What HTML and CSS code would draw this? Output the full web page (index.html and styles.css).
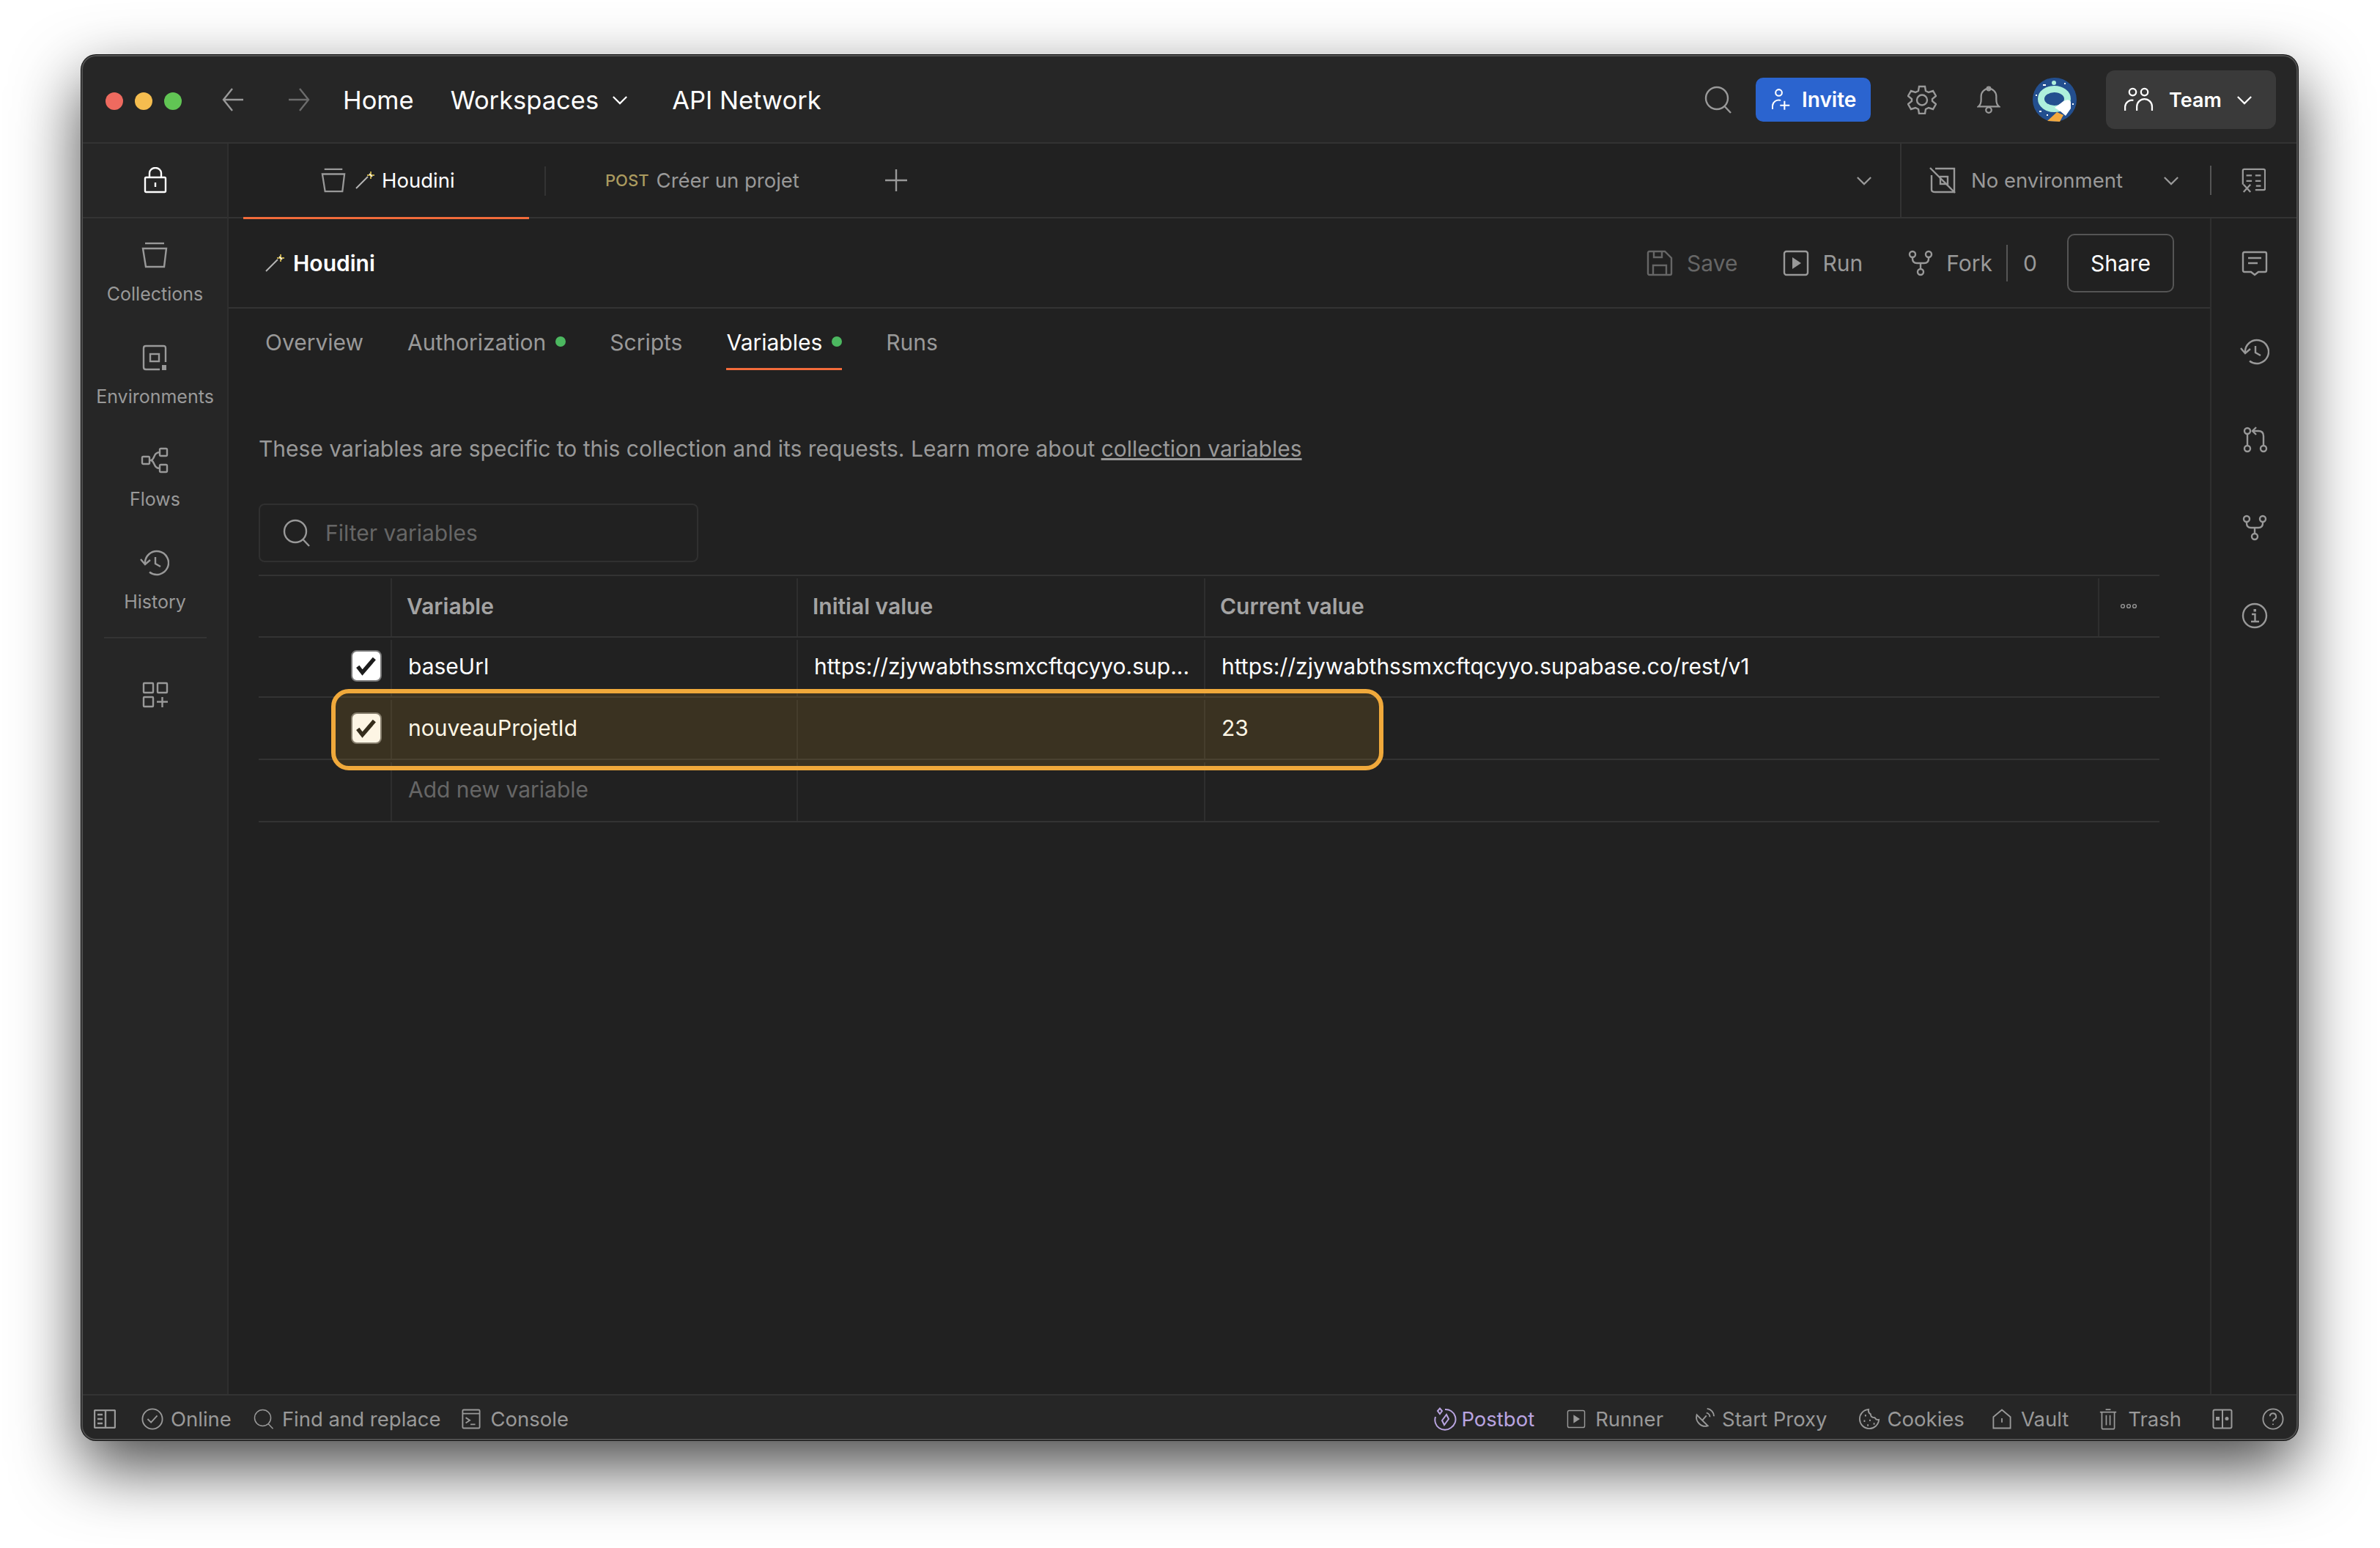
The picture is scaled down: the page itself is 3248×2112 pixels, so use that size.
FILE: index.html
```html
<!DOCTYPE html>
<html>
  <head>
    <meta charset="UTF-8" />
    <title>Houdini - Variables</title>
    <link rel="stylesheet" href="styles.css">
  </head>

  <body>
    <svg class="defs" width="0" height="0">
      <symbol id="i-search" viewBox="0 0 38 38"><circle cx="17" cy="17" r="15"/><path d="M27.5 28 L36 37"/></symbol>
      <symbol id="i-chevron" viewBox="0 0 24 14"><path d="M2 2 L12 12 L22 2"/></symbol>
      <symbol id="i-bucket" viewBox="0 0 36 36"><path d="M5 2 H31"/><path d="M2 9 H34 L31 34 H6 Z"/></symbol>
      <symbol id="i-env" viewBox="0 0 36 36"><path d="M33 24 V5 Q33 2 30 2 H6 Q3 2 3 5 V31 Q3 34 6 34 H25"/><rect x="12" y="13" width="12" height="10"/><rect class="fill" x="28" y="28" width="6" height="7"/></symbol>
      <symbol id="i-flows" viewBox="0 0 38 36"><rect x="2" y="13" width="10" height="10" rx="1.5"/><rect x="26" y="2" width="10" height="10" rx="1.5"/><rect x="26" y="24" width="10" height="10" rx="1.5"/><path d="M12 18 H14 C19 18 17 7 26 7"/><path d="M14 18 C19 18 17 29 26 29"/></symbol>
      <symbol id="i-history" viewBox="0 0 40 36"><path d="M7 19 A16 16 0 1 1 13 30.5"/><path d="M1 13 L7 20 L14 14"/><path d="M21 10 V19 L28 23"/></symbol>
      <symbol id="i-apps" viewBox="0 0 36 36"><rect x="2" y="2" width="13" height="13" rx="1"/><rect x="21" y="2" width="13" height="13" rx="1"/><rect x="2" y="21" width="13" height="13" rx="1"/><path d="M27.5 21 V35 M20 27.5 H35"/></symbol>
      <symbol id="i-lock" viewBox="0 0 36 36"><rect x="4" y="14" width="28" height="20" rx="1.5"/><path d="M10 14 V8 A8 7 0 0 1 26 8 V14"/><path d="M18 21 V27"/></symbol>
      <symbol id="i-save" viewBox="0 0 36 36"><path d="M2 4 Q2 2 4 2 H25 L34 11 V32 Q34 34 32 34 H4 Q2 34 2 32 Z"/><path d="M10 2 V10 H21 V2"/><path d="M9 34 V21 H27 V34"/></symbol>
      <symbol id="i-run" viewBox="0 0 36 36"><rect x="2" y="2" width="32" height="32" rx="3"/><path class="fill" d="M13 10 L25 18 L13 26 Z"/></symbol>
      <symbol id="i-fork" viewBox="0 0 36 36"><circle cx="7" cy="6" r="4"/><circle cx="29" cy="6" r="4"/><circle cx="18" cy="30" r="4"/><path d="M7 10 V12 Q7 18 13 18 H23 Q29 18 29 12 V10"/><path d="M18 18 V26"/></symbol>
      <symbol id="i-comment" viewBox="0 0 36 36"><path d="M4 2 H32 Q34 2 34 4 V27 Q34 29 32 29 H23 L18 33 L13 29 H4 Q2 29 2 27 V4 Q2 2 4 2 Z"/><path d="M9 10 H27 M9 17 H22"/></symbol>
      <symbol id="i-pull" viewBox="0 0 36 36"><circle cx="8" cy="6" r="4"/><circle cx="8" cy="30" r="4"/><circle cx="30" cy="30" r="4"/><path d="M8 10 V26"/><path d="M30 26 V13 Q30 6 23 6 H15"/><path d="M20 1 L15 6 L20 11"/></symbol>
      <symbol id="i-info" viewBox="0 0 36 36"><circle cx="18" cy="18" r="16"/><path d="M14 16 H18.5 V26 M13 26 H24"/><path class="fill" d="M16.5 9 H20 V12.5 H16.5 Z"/></symbol>
      <symbol id="i-noenv" viewBox="0 0 36 36"><path d="M8 2 H34 V34 H8 Q3 34 3 31 V11"/><rect x="15" y="13" width="10" height="10"/><path d="M1 1 L35 35"/></symbol>
      <symbol id="i-varsheet" viewBox="0 0 36 36"><path d="M3 24 V4 Q3 2 5 2 H33 Q35 2 35 4 V30 Q35 32 33 32 H21"/><path d="M8 11 H16 M21 11 H29 M8 19 H16 M21 19 H29 M22 26 H29"/><path d="M4 24 L14 35 M14 24 L4 35"/></symbol>
      <symbol id="i-gear" viewBox="0 0 40 40"><path d="M16 2 H24 L25 8 L29 10 L35 8 L39 15 L34 19 V22 L39 26 L35 33 L29 31 L25 33 L24 39 H16 L15 33 L11 31 L5 33 L1 26 L6 22 V19 L1 15 L5 8 L11 10 L15 8 Z"/><circle cx="20" cy="20.5" r="7"/></symbol>
      <symbol id="i-bell" viewBox="0 0 34 40"><path d="M2 30 Q6 27 6 20 V15 A11 11 0 0 1 28 15 V20 Q28 27 32 30 Z"/><circle cx="17" cy="4" r="2.5"/><circle cx="17" cy="35" r="4"/></symbol>
      <symbol id="i-team" viewBox="0 0 42 36"><circle cx="12" cy="7" r="5"/><circle cx="29" cy="7" r="5"/><path d="M1 34 V28 A10 10 0 0 1 13 19"/><path d="M18 34 V28 A11 11 0 0 1 40 28 V34"/></symbol>
      <symbol id="i-invite" viewBox="0 0 30 36"><circle cx="11" cy="7" r="5"/><path d="M1 33 V28 A10 10 0 0 1 14 19"/><path d="M20 20 V34 M13 27 H28"/></symbol>
      <symbol id="i-panel" viewBox="0 0 30 26"><rect x="1" y="1" width="28" height="24" rx="1.5"/><path d="M16 1 V25 M5 7 H12 M5 13 H12 M5 19 H12"/></symbol>
      <symbol id="i-online" viewBox="0 0 32 32"><circle cx="16" cy="16" r="14.5"/><path d="M9 16 L14 21 L23 11"/></symbol>
      <symbol id="i-console" viewBox="0 0 28 30"><rect x="1.5" y="1.5" width="25" height="27" rx="1.5"/><path d="M1.5 7 H26.5 M6 13 L12 17 L6 21 M13 23 H20"/></symbol>
      <symbol id="i-postbot" viewBox="0 0 32 32"><path d="M6 5 L9 1.5 L12 5 L9 9 Z M12 18 L18 10 L21 16 L15 24 Z"/><path d="M16 3 A13.5 13.5 0 0 1 24 28 A13.5 13.5 0 0 1 3 13"/></symbol>
      <symbol id="i-proxy" viewBox="0 0 32 32"><path d="M6 10 A13 13 0 0 0 22 26 Z"/><path d="M14 18 L20 11 M20 7 A6 6 0 0 1 25 13 M21 1 A11 11 0 0 1 31 12"/></symbol>
      <symbol id="i-cookie" viewBox="0 0 32 32"><path d="M15 2 A14 14 0 1 0 30 17 Q26 18 24 14 Q18 14 18 9 Q14 7 15 2 Z"/><path class="crumbs" d="M9.5 11 h2 M8 19 h2 M16 18 h2 M13 25 h2 M22 23 h2"/></symbol>
      <symbol id="i-vault" viewBox="0 0 28 30"><path d="M1.5 12 L14 1.5 L26.5 12 V28.5 H1.5 Z"/><path d="M14 14 V20"/></symbol>
      <symbol id="i-trash" viewBox="0 0 28 34"><path d="M1 6 H27 M10 2 H18"/><path d="M4 6 V31 Q4 33 6 33 H22 Q24 33 24 31 V6 M11 11 V27 M17 11 V27"/></symbol>
      <symbol id="i-panes" viewBox="0 0 28 28"><rect x="1.5" y="1.5" width="25" height="25" rx="2"/><path d="M14 1.5 V26.5"/><rect class="fill" x="5" y="11" width="5" height="5"/><circle class="fill" cx="20" cy="13.5" r="2.5"/></symbol>
      <symbol id="i-help" viewBox="0 0 32 32"><circle cx="16" cy="16" r="14.5"/><path d="M11.5 12 A4.5 4.5 0 1 1 17.5 16.5 Q16 17.5 16 19.5"/><path d="M16 23 V24.5"/></symbol>
      <symbol id="i-wand" viewBox="0 0 27 24"><path class="wand-stick" d="M1 23 L17 7"/><path class="wand-spark" d="M21 0 V10 M16 5 H26"/><path class="wand-tip" d="M19 3 L23 7"/></symbol>
    </svg>

    <div class="window">
      <header class="topbar">
        <div class="dots">
          <span class="dot red"></span>
          <span class="dot yellow"></span>
          <span class="dot green"></span>
        </div>
        <svg class="arrow back" viewBox="0 0 30 36"><path d="M29 18 H2 M14 3 L2 18 L14 33"/></svg>
        <svg class="arrow forward" viewBox="0 0 30 36"><path d="M1 18 H28 M16 3 L28 18 L16 33"/></svg>
        <a class="nav-link home">Home</a>
        <a class="nav-link workspaces">Workspaces</a>
        <svg class="ico chev-nav"><use href="#i-chevron"/></svg>
        <a class="nav-link network">API Network</a>

        <div class="top-right">
          <svg class="ico top-search"><use href="#i-search"/></svg>
          <button class="invite"><svg class="ico invite-ico"><use href="#i-invite"/></svg>Invite</button>
          <svg class="ico top-gear"><use href="#i-gear"/></svg>
          <svg class="ico top-bell"><use href="#i-bell"/></svg>
          <svg class="avatar" viewBox="0 0 60 60">
            <circle cx="30" cy="30" r="30" fill="#234f8f"/>
            <path d="M20 59 L33 47 L42 51 L37 60 Z" fill="#f3a93e"/>
            <ellipse cx="29.5" cy="29" rx="18" ry="13.5" fill="none" stroke="#aef0dc" stroke-width="9"/>
            <circle cx="29" cy="7" r="3" fill="#aef0dc"/>
            <path d="M30 41 L42 32 Q50 28 52 33 L52 42 L45 52 L38 46 Z" fill="#fff"/>
            <path d="M14 10 h4 M9 46 h3 M4 24 h2 M54 36 h2 M43 8 h2 M19 51 h2" stroke="#fff" stroke-width="2"/>
          </svg>
          <button class="team"><svg class="ico team-ico"><use href="#i-team"/></svg>Team<svg class="ico team-chev"><use href="#i-chevron"/></svg></button>
        </div>
      </header>

      <div class="body">
        <aside class="sidebar">
          <div class="lock-cell"><svg class="ico lock"><use href="#i-lock"/></svg></div>
          <nav class="side-nav">
            <div class="side-item"><svg class="ico"><use href="#i-bucket"/></svg><span>Collections</span></div>
            <div class="side-item"><svg class="ico"><use href="#i-env"/></svg><span>Environments</span></div>
            <div class="side-item"><svg class="ico"><use href="#i-flows"/></svg><span>Flows</span></div>
            <div class="side-item"><svg class="ico"><use href="#i-history"/></svg><span>History</span></div>
          </nav>
          <div class="side-rule"></div>
          <svg class="ico side-apps"><use href="#i-apps"/></svg>
        </aside>

        <main class="main">
          <div class="tabbar">
            <div class="tab active">
              <svg class="ico tab-bucket"><use href="#i-bucket"/></svg>
              <svg class="ico wand"><use href="#i-wand"/></svg>
              <span>Houdini</span>
            </div>
            <div class="tab-sep"></div>
            <div class="tab second"><span class="method">POST</span><span>Créer un projet</span></div>
            <svg class="plus" viewBox="0 0 30 30"><path d="M15 0 V30 M0 15 H30"/></svg>
            <svg class="ico tabs-chev"><use href="#i-chevron"/></svg>
            <div class="env">
              <svg class="ico env-ico"><use href="#i-noenv"/></svg>
              <span>No environment</span>
              <svg class="ico env-chev"><use href="#i-chevron"/></svg>
              <div class="env-sep"></div>
              <svg class="ico env-sheet"><use href="#i-varsheet"/></svg>
            </div>
          </div>

          <div class="content">
            <section class="panel">
              <div class="panel-head">
                <svg class="ico wand"><use href="#i-wand"/></svg>
                <strong class="title">Houdini</strong>
                <div class="actions">
                  <span class="action disabled"><svg class="ico"><use href="#i-save"/></svg>Save</span>
                  <span class="action run"><svg class="ico"><use href="#i-run"/></svg>Run</span>
                  <span class="action fork"><svg class="ico"><use href="#i-fork"/></svg>Fork</span>
                  <span class="fork-count">0</span>
                  <button class="share">Share</button>
                </div>
              </div>

              <div class="subtabs">
                <a class="subtab">Overview</a>
                <a class="subtab">Authorization<i class="status-dot"></i></a>
                <a class="subtab">Scripts</a>
                <a class="subtab active">Variables<i class="status-dot"></i></a>
                <a class="subtab">Runs</a>
              </div>

              <div class="vars">
                <p class="desc">These variables are specific to this collection and its requests. Learn more about <u>collection variables</u></p>
                <div class="filter">
                  <svg class="ico filter-ico"><use href="#i-search"/></svg>
                  <span>Filter variables</span>
                </div>

                <div class="table">
                  <div class="row head">
                    <div class="cell check"></div>
                    <div class="cell">Variable</div>
                    <div class="cell">Initial value</div>
                    <div class="cell">Current value</div>
                    <div class="cell more"><svg viewBox="0 0 24 8" class="more-ico"><circle cx="4" cy="4" r="2.4"/><circle cx="12" cy="4" r="2.4"/><circle cx="20" cy="4" r="2.4"/></svg></div>
                  </div>
                  <div class="row r1">
                    <div class="cell check"><span class="box"><svg viewBox="0 0 42 42"><path d="M8 22 L15 31 L33 10"/></svg></span></div>
                    <div class="cell">baseUrl</div>
                    <div class="cell">https://zjywabthssmxcftqcyyo.sup...</div>
                    <div class="cell last">https://zjywabthssmxcftqcyyo.supabase.co/rest/v1</div>
                  </div>
                  <div class="row r2">
                    <div class="cell check"><span class="box"><svg viewBox="0 0 42 42"><path d="M8 22 L15 31 L33 10"/></svg></span></div>
                    <div class="cell">nouveauProjetId</div>
                    <div class="cell"></div>
                    <div class="cell last">23</div>
                  </div>
                  <div class="row r3">
                    <div class="cell check"></div>
                    <div class="cell add">Add new variable</div>
                    <div class="cell"></div>
                    <div class="cell last"></div>
                  </div>
                  <div class="highlight"></div>
                </div>
              </div>
            </section>

            <aside class="rightbar">
              <svg class="ico"><use href="#i-comment"/></svg>
              <svg class="ico"><use href="#i-history"/></svg>
              <svg class="ico"><use href="#i-pull"/></svg>
              <svg class="ico"><use href="#i-fork"/></svg>
              <svg class="ico"><use href="#i-info"/></svg>
            </aside>
          </div>
        </main>
      </div>

      <footer class="status">
        <svg class="ico st-panel"><use href="#i-panel"/></svg>
        <span class="st online"><svg class="ico st-online"><use href="#i-online"/></svg>Online</span>
        <span class="st find"><svg class="ico st-find"><use href="#i-search"/></svg>Find and replace</span>
        <span class="st console"><svg class="ico st-console"><use href="#i-console"/></svg>Console</span>

        <div class="st-right">
          <span class="st postbot"><svg class="ico st-postbot"><use href="#i-postbot"/></svg>Postbot</span>
          <span class="st runner"><svg class="ico st-runner"><use href="#i-run"/></svg>Runner</span>
          <span class="st proxy"><svg class="ico st-proxy"><use href="#i-proxy"/></svg>Start Proxy</span>
          <span class="st"><svg class="ico st-proxy"><use href="#i-cookie"/></svg>Cookies</span>
          <span class="st vault"><svg class="ico st-vault"><use href="#i-vault"/></svg>Vault</span>
          <span class="st trash"><svg class="ico st-trash"><use href="#i-trash"/></svg>Trash</span>
          <svg class="ico st-panes"><use href="#i-panes"/></svg>
          <svg class="ico st-help"><use href="#i-help"/></svg>
        </div>
      </footer>
    </div>
  </body>
</html>
```

FILE: styles.css
```css
* {
  box-sizing: border-box;
}

html, body {
  height: 100%;
}

body {
  margin: 0;
  background-color: white;
  font-family: Inter, "Noto Sans", sans-serif;
  color: #fff;
  overflow: hidden;
}

.defs {
  position: absolute;
}

button {
  font-family: inherit;
  border: 0;
  color: inherit;
}

.ico {
  width: 36px;
  height: 36px;
  flex: none;
  fill: none;
  stroke: currentColor;
  stroke-width: 2.4;
  color: #999;
}

.fill {
  fill: currentColor;
  stroke: none;
}

.crumbs {
  stroke-width: 2.6;
}

.window {
  margin: 75px 0 0 111px;
  width: 3025px;
  height: 1890px;
  display: flex;
  flex-direction: column;
  background-color: #212121;
  border-radius: 20px;
  box-shadow: 0 0 0 1px #111, 0 36px 90px rgba(0, 0, 0, 0.72);
  overflow: hidden;
  position: relative;
}

/* light rim of the window, has to sit over the bars */
.window::after {
  content: "";
  position: absolute;
  inset: 0;
  border-radius: 20px;
  box-shadow: inset 0 0 0 2px #505050;
  pointer-events: none;
}

/* top bar */
.topbar {
  height: 121px;
  flex: none;
  display: flex;
  align-items: center;
  padding: 3px 30px 0 33px;
  background-color: #262626;
  border-bottom: 2px solid #333;
}

.dots {
  display: flex;
  gap: 16px;
  margin-top: 4px;
}

.dot {
  width: 24px;
  height: 24px;
  border-radius: 50%;
}

.red { background-color: #ee6a5f; }
.yellow { background-color: #f5bd4f; }
.green { background-color: #61c554; }

.arrow {
  width: 30px;
  height: 36px;
  fill: none;
  stroke: #999;
  stroke-width: 2.4;
}

.back { margin-left: 55px; }
.forward { margin-left: 60px; stroke: #6c6c6c; }

.nav-link {
  font-size: 34.5px;
  color: #fff;
}

.home { margin-left: 45px; }
.workspaces { margin-left: 50px; }
.network { margin-left: 60px; }

.chev-nav {
  width: 22px;
  height: 13px;
  margin-left: 18px;
  color: #fff;
}

.top-right {
  margin-left: auto;
  display: flex;
  align-items: center;
}

.top-search { width: 38px; height: 38px; }

.invite {
  margin-left: 32px;
  width: 157px;
  height: 60px;
  display: flex;
  align-items: center;
  padding-left: 22px;
  gap: 15px;
  background-color: #2b64cf;
  border-radius: 10px;
  font-size: 28px;
  font-weight: 600;
}

.invite-ico {
  width: 26px;
  height: 32px;
  color: #fff;
}

.top-gear { width: 40px; height: 40px; margin-left: 50px; }
.top-bell { width: 32px; height: 40px; margin-left: 55px; }

.avatar {
  width: 60px;
  height: 60px;
  margin-left: 44px;
  flex: none;
}

.team {
  margin-left: 40px;
  width: 232px;
  height: 80px;
  display: flex;
  align-items: center;
  padding-left: 25px;
  background-color: #3a3a3a;
  border-radius: 12px;
  font-size: 27px;
  font-weight: 600;
}

.team-ico {
  width: 40px;
  height: 34px;
  color: #fff;
  margin-right: 21px;
}

.team-chev {
  width: 22px;
  height: 13px;
  margin-left: 20px;
  color: #fff;
}

/* body */
.body {
  flex: 1;
  display: flex;
  min-height: 0;
}

.sidebar {
  width: 201px;
  flex: none;
  display: flex;
  flex-direction: column;
  align-items: center;
  background-color: #262626;
  border-right: 2px solid #2f2f2f;
}

.lock-cell {
  width: 100%;
  height: 102px;
  flex: none;
  display: flex;
  align-items: center;
  justify-content: center;
  padding-left: 2px;
  border-bottom: 2px solid #333;
}

.lock {
  color: #fff;
}

.side-nav {
  display: flex;
  flex-direction: column;
  padding-top: 16px;
  margin-left: 2px;
}

.side-item {
  height: 140px;
  display: flex;
  flex-direction: column;
  align-items: center;
  padding-top: 16px;
  font-size: 25px;
  color: #999;
}

.side-item .ico {
  width: 40px;
}

.side-item span {
  margin-top: 20px;
  line-height: 30px;
}

.side-rule {
  width: 140px;
  height: 2px;
  margin: -5px 0 0 2px;
  background-color: #333;
}

.side-apps {
  margin: 59px 0 0 2px;
}

.main {
  flex: 1;
  min-width: 0;
  display: flex;
  flex-direction: column;
}

/* tabs */
.tabbar {
  height: 102px;
  flex: none;
  display: flex;
  align-items: stretch;
  border-bottom: 2px solid #333;
  font-size: 27.5px;
  padding-left: 20px;
}

.tab {
  display: flex;
  align-items: center;
  position: relative;
}

.tab.active {
  width: 390px;
  padding-left: 106px;
  height: 103px;
  border-bottom: 3px solid #f26b3a;
  color: #fff;
}

.tab-bucket {
  width: 34px;
  height: 36px;
}

.wand {
  width: 27px;
  height: 24px;
}

.tab.active .wand {
  margin-left: 13px;
  margin-right: 9px;
}

.wand-stick {
  stroke: #b5b5b5;
  stroke-width: 2;
}

.wand-spark {
  stroke: #f5d65a;
  stroke-width: 1.5;
}

.wand-tip {
  stroke: #fff;
  stroke-width: 1.5;
}

.tab-sep {
  width: 2px;
  height: 40px;
  margin: 31px 0 0 21px;
  background-color: #333;
}

.tab.second {
  margin-left: 81px;
  gap: 10px;
  color: #999;
}

.method {
  font-size: 22px;
  font-weight: 500;
  color: #ab9b5f;
}

.plus {
  width: 30px;
  height: 30px;
  align-self: center;
  margin-left: 117px;
  fill: none;
  stroke: #999;
  stroke-width: 2.4;
}

.tabs-chev {
  width: 22px;
  height: 13px;
  align-self: center;
  margin-left: auto;
  margin-right: 38px;
}

.env {
  width: 543px;
  display: flex;
  align-items: center;
  padding-left: 38px;
  border-left: 2px solid #333;
  color: #999;
}

.env span {
  margin-left: 21px;
  width: 262px;
  white-space: nowrap;
}

.env-chev {
  width: 22px;
  height: 13px;
}

.env-sep {
  width: 2px;
  height: 40px;
  margin-left: 42px;
  background-color: #555;
}

.env-sheet {
  width: 34px;
  height: 36px;
  margin-left: 40px;
}

/* panel */
.content {
  flex: 1;
  min-height: 0;
  display: flex;
}

.panel {
  flex: 1;
  min-width: 0;
}

.panel-head {
  height: 123px;
  display: flex;
  align-items: center;
  padding: 0 49px 0 50px;
  border-bottom: 2px solid #333;
}

.title {
  margin-left: 11px;
  font-size: 30px;
  font-weight: 600;
}

.actions {
  margin-left: auto;
  display: flex;
  align-items: center;
  font-size: 30px;
  color: #999;
}

.action {
  display: flex;
  align-items: center;
  gap: 19px;
}

.action.disabled {
  color: #666;
}

.action.disabled .ico {
  color: #666;
}

.action.run {
  margin-left: 61px;
}

.action.fork {
  margin-left: 61px;
  gap: 17px;
}

.fork-count {
  margin-left: 19px;
  padding-left: 21px;
  border-left: 2px solid #555;
  line-height: 50px;
}

.share {
  margin-left: 41px;
  width: 146px;
  height: 80px;
  background: none;
  border: 2px solid #555;
  border-radius: 10px;
  font-size: 30px;
  color: #fff;
}

.subtabs {
  height: 84px;
  display: flex;
  gap: 60px;
  padding-left: 50px;
  font-size: 30px;
  color: #999;
}

.subtab {
  padding-top: 26px;
  line-height: 40px;
}

.subtab.active {
  color: #fff;
  border-bottom: 3px solid #f26b3a;
  height: 84px;
}

.status-dot {
  display: inline-block;
  width: 14px;
  height: 14px;
  margin-left: 13px;
  border-radius: 50%;
  background-color: #4cb860;
  vertical-align: 5px;
}

.vars {
  padding: 0 69px 0 41px;
}

.desc {
  margin: 87px 0 0;
  line-height: 40px;
  font-size: 30px;
  color: #999;
}

.filter {
  margin-top: 55px;
  width: 600px;
  height: 80px;
  display: flex;
  align-items: center;
  padding-left: 31px;
  gap: 20px;
  border: 2px solid #303030;
  border-radius: 8px;
  font-size: 30px;
  color: #666;
}

.filter-ico {
  width: 38px;
  height: 38px;
}

.table {
  margin-top: 17px;
  position: relative;
  border-top: 2px solid #333;
  font-size: 30px;
}

.row {
  display: grid;
  grid-template-columns: 180px 554px 556px 1220px 82px;
  border-bottom: 2px solid #333;
  height: 85px;
}

.row.head { height: 84px; font-weight: 600; color: #a3a3a3; }
.row.r1 { height: 82px; }

.cell {
  display: flex;
  align-items: center;
  padding: 0 0 4px 22px;
  margin-top: 3px;
  border-left: 2px solid #2e2e2e;
  white-space: nowrap;
  color: #eee;
}

.row.head .cell {
  padding-left: 20px;
  color: #a3a3a3;
}

.cell.check {
  border-left: 0;
  padding: 0 12px 4px 0;
  justify-content: flex-end;
}

.row.r2 .cell,
.row.r1 .cell {
  color: #fff;
}

.row.r1 .cell,
.row.r3 .cell {
  padding-bottom: 6px;
}

.row .cell.add {
  color: #666;
}

.cell.last {
  grid-column: 4 / span 2;
}

.row.head .cell.more {
  padding-left: 0;
  justify-content: center;
}

.more-ico {
  width: 24px;
  height: 8px;
  fill: none;
  stroke: #999;
  stroke-width: 1.4;
}

.box {
  width: 42px;
  height: 43px;
  display: block;
  background-color: #fff;
  border: 2px solid #777;
  border-radius: 8px;
}

.box svg {
  width: 38px;
  height: 39px;
  display: block;
  fill: none;
  stroke: #1c1c1c;
  stroke-width: 6;
}

.highlight {
  position: absolute;
  left: 99px;
  top: 154px;
  width: 1436px;
  height: 111px;
  border: 6px solid #f0a93b;
  border-radius: 24px;
  background-color: rgba(240, 169, 30, 0.12);
}

.rightbar {
  width: 120px;
  flex: none;
  display: flex;
  flex-direction: column;
  align-items: center;
  border-left: 2px solid #2f2f2f;
  padding-top: 44px;
  gap: 84px;
}

.rightbar .ico {
  width: 40px;
}

/* status bar */
.status {
  height: 63px;
  flex: none;
  display: flex;
  align-items: center;
  padding: 2px 19px 0 17px;
  background-color: #262626;
  border-top: 2px solid #333;
  font-size: 27.5px;
  color: #999;
}

.st {
  display: flex;
  align-items: center;
  gap: 10px;
}

.st .ico,
.st-panes,
.st-help {
  stroke-width: 2;
}

.st-panel { width: 30px; height: 26px; }
.st-online { width: 30px; height: 30px; }
.st-find { width: 28px; height: 28px; }
.st-console { width: 26px; height: 28px; }
.st-postbot { width: 32px; height: 32px; }
.st-runner { width: 26px; height: 28px; }
.st-proxy { width: 30px; height: 30px; }
.st-vault { width: 26px; height: 28px; }
.st-trash { width: 24px; height: 30px; }
.st-panes { width: 28px; height: 28px; }
.st-help { width: 30px; height: 30px; margin-left: -2px; }

.online { margin-left: 35px; }
.find { margin-left: 30px; gap: 11px; }
.console { margin-left: 29px; gap: 13px; }
.runner { margin-left: 2px; gap: 13px; }
.proxy { margin-left: -2px; }
.vault { margin-left: -4px; gap: 13px; }
.trash { gap: 15px; }

.st-right {
  margin-left: auto;
  display: flex;
  align-items: center;
  gap: 42px;
}

.postbot,
.postbot .ico {
  color: #b9a4e0;
  gap: 6px;
}
```
